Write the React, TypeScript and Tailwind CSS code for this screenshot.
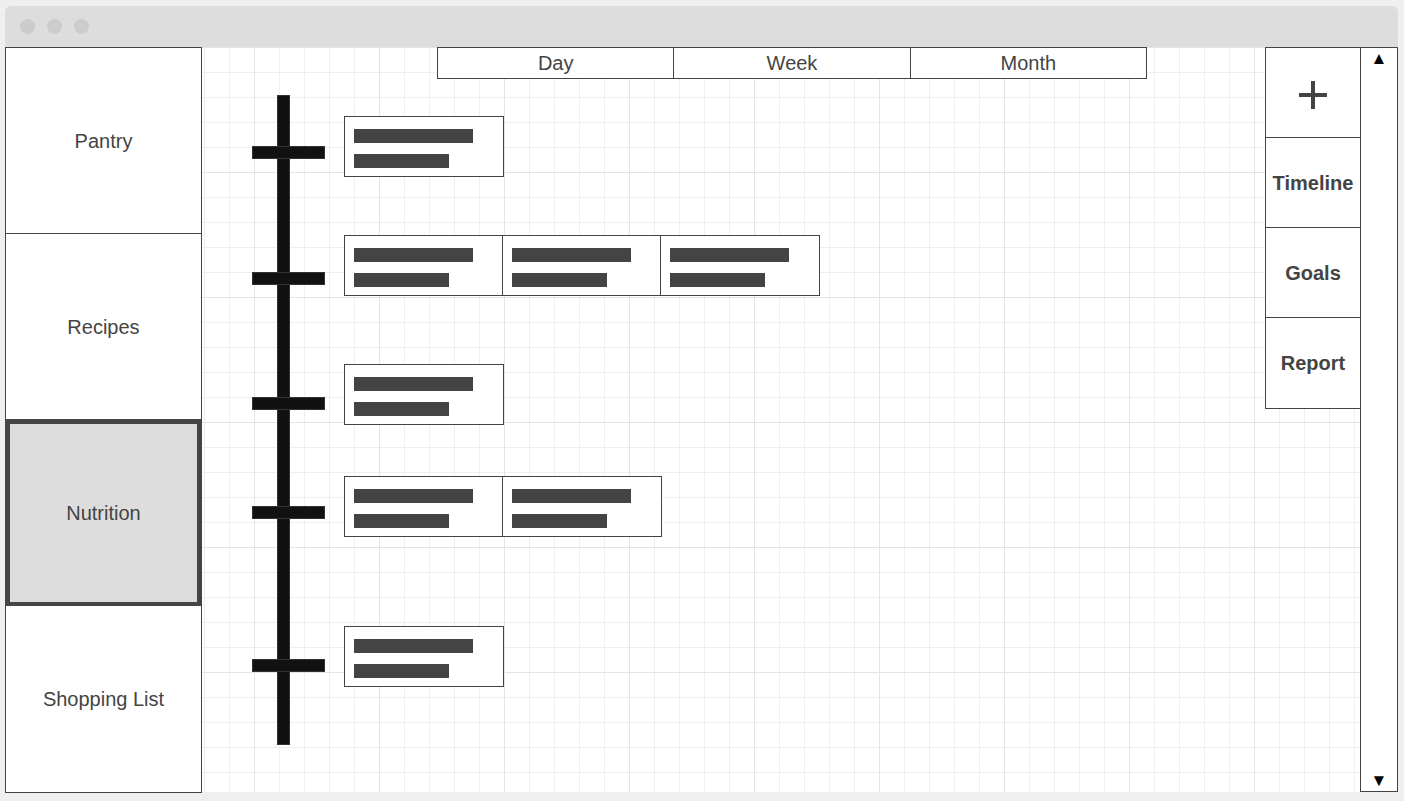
import React from 'react'

const navItems = ['Pantry', 'Recipes', 'Nutrition', 'Shopping List']
const tabs = ['Day', 'Week', 'Month']
const sideTools = ['Timeline', 'Goals', 'Report']

// one entry per timeline stop: gap above the card, crossbar offset, number of cells
const stops = [
  { rowClass: 'mt-[21px]', barClass: 'mt-[30px]', cells: 1 },
  { rowClass: 'mt-[58px]', barClass: 'mt-[37px]', cells: 3 },
  { rowClass: 'mt-[68px]', barClass: 'mt-[33px]', cells: 1 },
  { rowClass: 'mt-[51px]', barClass: 'mt-[30px]', cells: 2 },
  { rowClass: 'mt-[89px]', barClass: 'mt-[33px]', cells: 1 },
]

function EntryCell({ last }: { last: boolean }) {
  return (
    <div className={`w-[158px] h-[59px] pl-[9px] pt-[12px] ${last ? '' : 'border-r border-[#444]'}`}>
      <div className="w-[119px] h-[14px] bg-[#444]" />
      <div className="mt-[11px] w-[95px] h-[14px] bg-[#444]" />
    </div>
  )
}

export default function App() {
  return (
    <div className="h-[801px] w-full bg-[#efefef] pt-[6px] pl-[5px] font-['Liberation_Sans',Arial,sans-serif] text-[#444]">
      <div className="w-[1393px] flex flex-col">
        {/* Window chrome */}
        <div className="h-[41px] rounded-t-[6px] bg-[#dddddd] flex items-center gap-[12px] pl-[15px]">
          <span className="w-[15px] h-[15px] rounded-full bg-[#cccccc]" />
          <span className="w-[15px] h-[15px] rounded-full bg-[#cccccc]" />
          <span className="w-[15px] h-[15px] rounded-full bg-[#cccccc]" />
        </div>

        <div className="flex items-start">
          {/* Left nav */}
          <div className="w-[197px] h-[746px] border border-[#444] bg-white grid grid-rows-4">
            {navItems.map((item, i) => {
              const selected = item === 'Nutrition'
              return (
                <div
                  key={item}
                  className={`flex items-center justify-center text-[20px] ${
                    selected
                      ? 'bg-[#dddddd] border-4 border-[#444]'
                      : i < navItems.length - 1
                        ? 'border-b border-[#444]'
                        : ''
                  }`}
                >
                  {item}
                </div>
              )
            })}
          </div>

          {/* Canvas */}
          <div className="flex-1 h-[745px] flex items-start bg-white bg-[linear-gradient(to_right,#e4e4e4_1px,transparent_1px),linear-gradient(to_bottom,#e4e4e4_1px,transparent_1px),linear-gradient(to_right,#efefef_1px,transparent_1px),linear-gradient(to_bottom,#efefef_1px,transparent_1px)] bg-[size:125px_125px,125px_125px,25px_25px,25px_25px] bg-[position:52px_0,0_0,2px_0,0_0]">
            <div className="flex-1 flex flex-col">
              {/* Range tabs */}
              <div className="ml-[235px] w-[710px] h-[32px] flex border border-[#444] bg-white">
                {tabs.map((t, i) => (
                  <div
                    key={t}
                    className={`flex-1 flex items-center justify-center text-[20px] ${
                      i < tabs.length - 1 ? 'border-r border-[#444]' : ''
                    }`}
                  >
                    {t}
                  </div>
                ))}
              </div>

              {/* Timeline */}
              <div className="relative mt-[16px] h-[650px]">
                <div className="absolute left-[75px] top-0 w-[13px] h-[650px] bg-[#111] border border-[#333]" />
                {stops.map((s, i) => (
                  <div key={i} className={`relative flex items-start pl-[50px] ${s.rowClass}`}>
                    <div className={`w-[73px] h-[13px] bg-[#111] border border-[#333] ${s.barClass}`} />
                    <div className="ml-[19px] flex border border-[#444] bg-white">
                      {Array.from({ length: s.cells }).map((_, c) => (
                        <EntryCell key={c} last={c === s.cells - 1} />
                      ))}
                    </div>
                  </div>
                ))}
              </div>
            </div>

            {/* Right tools */}
            <div className="w-[95px] border-t border-l border-b border-[#444] bg-white flex flex-col">
              <div className="h-[90px] pt-[5px] border-b border-[#444] flex items-center justify-center">
                <svg width="30" height="30" viewBox="0 0 30 30">
                  <path d="M15 1v28M1 15h28" stroke="#444" strokeWidth="4" />
                </svg>
              </div>
              {sideTools.map((t, i) => (
                <div
                  key={t}
                  className={`h-[90px] flex items-center justify-center text-[20px] font-bold ${
                    i < sideTools.length - 1 ? 'border-b border-[#444]' : ''
                  }`}
                >
                  {t}
                </div>
              ))}
            </div>
          </div>

          {/* Scrollbar */}
          <div className="w-[38px] h-[745px] border border-[#444] bg-white flex flex-col items-center justify-between pt-[2px] pb-[2px] text-black text-[17px] leading-none">
            <span>▲</span>
            <span>▼</span>
          </div>
        </div>
      </div>
    </div>
  )
}
